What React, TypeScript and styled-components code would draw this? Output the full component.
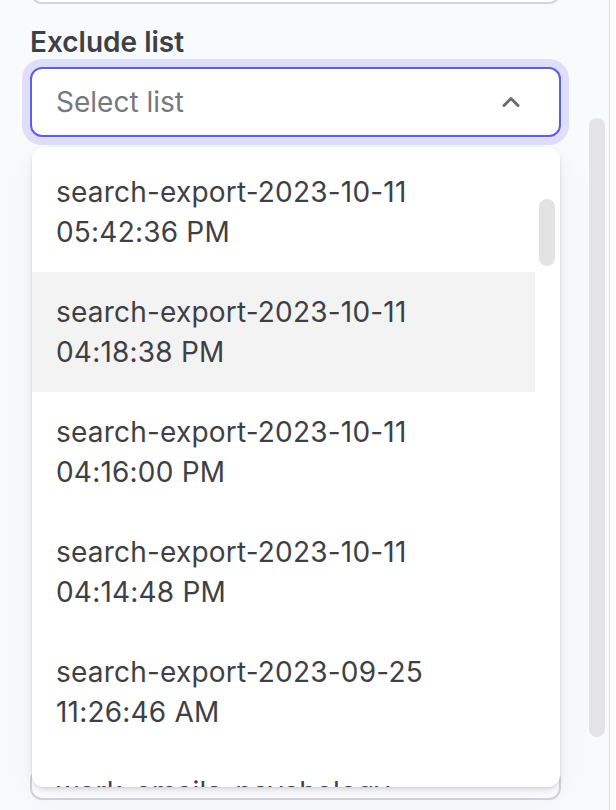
import React from "react";
import styled, { createGlobalStyle } from "styled-components";

const GlobalStyle = createGlobalStyle`
  html, body {
    margin: 0;
    padding: 0;
    background: #f9fafc;
  }
  body {
    font-family: Inter, "Noto Sans", "Liberation Sans", sans-serif;
    -webkit-font-smoothing: antialiased;
  }
  * { box-sizing: border-box; }
`;

const Page = styled.div`
  display: flex;
  width: 616px;
  height: 810px;
  overflow: hidden;
  background: #f9fafc;
`;

const Main = styled.div`
  width: 584px;
  flex: none;
  height: 810px;
  padding: 0 0 10px 30px;
  display: flex;
  flex-direction: column;
`;

const Column = styled.div`
  width: 531px;
  flex: 1;
  display: flex;
  flex-direction: column;
`;

const TopBox = styled.div`
  height: 40px;
  margin-top: -36px;
  border: 2px solid #d4d4d8;
  border-radius: 12px;
  background: #ffffff;
  flex: none;
`;

const Label = styled.label`
  margin: 18px 0 5px;
  font-size: 28px;
  line-height: 40px;
  font-weight: 600;
  color: #3f3f46;
`;

const Field = styled.div`
  position: relative;
  flex: none;
`;

const Trigger = styled.div`
  height: 70px;
  border: 2px solid #5b5ef4;
  border-radius: 12px;
  background: #ffffff;
  box-shadow: 0 0 0 8px #dfdffb;
  display: flex;
  align-items: center;
  justify-content: space-between;
  padding: 0 38px 0 24px;
`;

const Placeholder = styled.span`
  font-size: 28px;
  line-height: 40px;
  color: #77777e;
`;

const Chevron = styled.svg`
  width: 20px;
  height: 12px;
  display: block;
`;

const Panel = styled.div`
  position: absolute;
  top: calc(100% + 10px);
  left: 2px;
  right: 1px;
  height: 640px;
  background: #ffffff;
  border-radius: 12px;
  box-shadow: 0 0 0 1px rgba(0, 0, 0, 0.025), 0 4px 6px -1px rgba(0, 0, 0, 0.1),
    0 2px 4px -2px rgba(0, 0, 0, 0.08), 0 10px 40px rgba(30, 40, 90, 0.05);
  display: flex;
  overflow: hidden;
  z-index: 2;
`;

const List = styled.div`
  flex: 1;
  padding-top: 5px;
  display: flex;
  flex-direction: column;
`;

const Option = styled.div<{ $active?: boolean }>`
  flex: none;
  padding: 20px 24px;
  font-size: 28px;
  line-height: 40px;
  letter-spacing: 0.2px;
  color: #3f3f46;
  background: ${(p) => (p.$active ? "#f3f3f3" : "#ffffff")};
`;

const Gutter = styled.div`
  width: 25px;
  flex: none;
  padding: 52px 5px 0 4px;
`;

const Thumb = styled.div<{ $h: number; $color: string }>`
  width: 16px;
  height: ${(p) => p.$h}px;
  border-radius: 8px;
  background: ${(p) => p.$color};
`;

const LowerBox = styled.div`
  margin-top: auto;
  height: 32px;
  border: 2px solid #d4d4d8;
  border-radius: 12px;
  background: #ffffff;
  flex: none;
`;

const Track = styled.div`
  width: 26px;
  flex: none;
  padding: 118px 0 0 5px;
  border-right: 1px solid #dcdde3;
`;

const Edge = styled.div`
  flex: 1;
  background: #fcfcfd;
`;

const options = [
  "search-export-2023-10-11 05:42:36 PM",
  "search-export-2023-10-11 04:18:38 PM",
  "search-export-2023-10-11 04:16:00 PM",
  "search-export-2023-10-11 04:14:48 PM",
  "search-export-2023-09-25 11:26:46 AM",
  "work_emails_psychology",
];

export default function App() {
  return (
    <>
      <GlobalStyle />
      <Page>
        <Main>
          <Column>
            <TopBox />
            <Label>Exclude list</Label>
            <Field>
              <Trigger>
                <Placeholder>Select list</Placeholder>
                <Chevron viewBox="0 0 20 12" fill="none">
                  <path
                    d="M3 9.5 L10 2.5 L17 9.5"
                    stroke="#6b6b73"
                    strokeWidth="3"
                    strokeLinecap="round"
                    strokeLinejoin="round"
                  />
                </Chevron>
              </Trigger>
              <Panel>
                <List>
                  {options.map((o, i) => (
                    <Option key={o} $active={i === 1}>
                      {o}
                    </Option>
                  ))}
                </List>
                <Gutter>
                  <Thumb $h={67} $color="#e3e3e3" />
                </Gutter>
              </Panel>
            </Field>
            <LowerBox />
          </Column>
        </Main>
        <Track>
          <Thumb $h={619} $color="#e4e4e7" />
        </Track>
        <Edge />
      </Page>
    </>
  );
}
